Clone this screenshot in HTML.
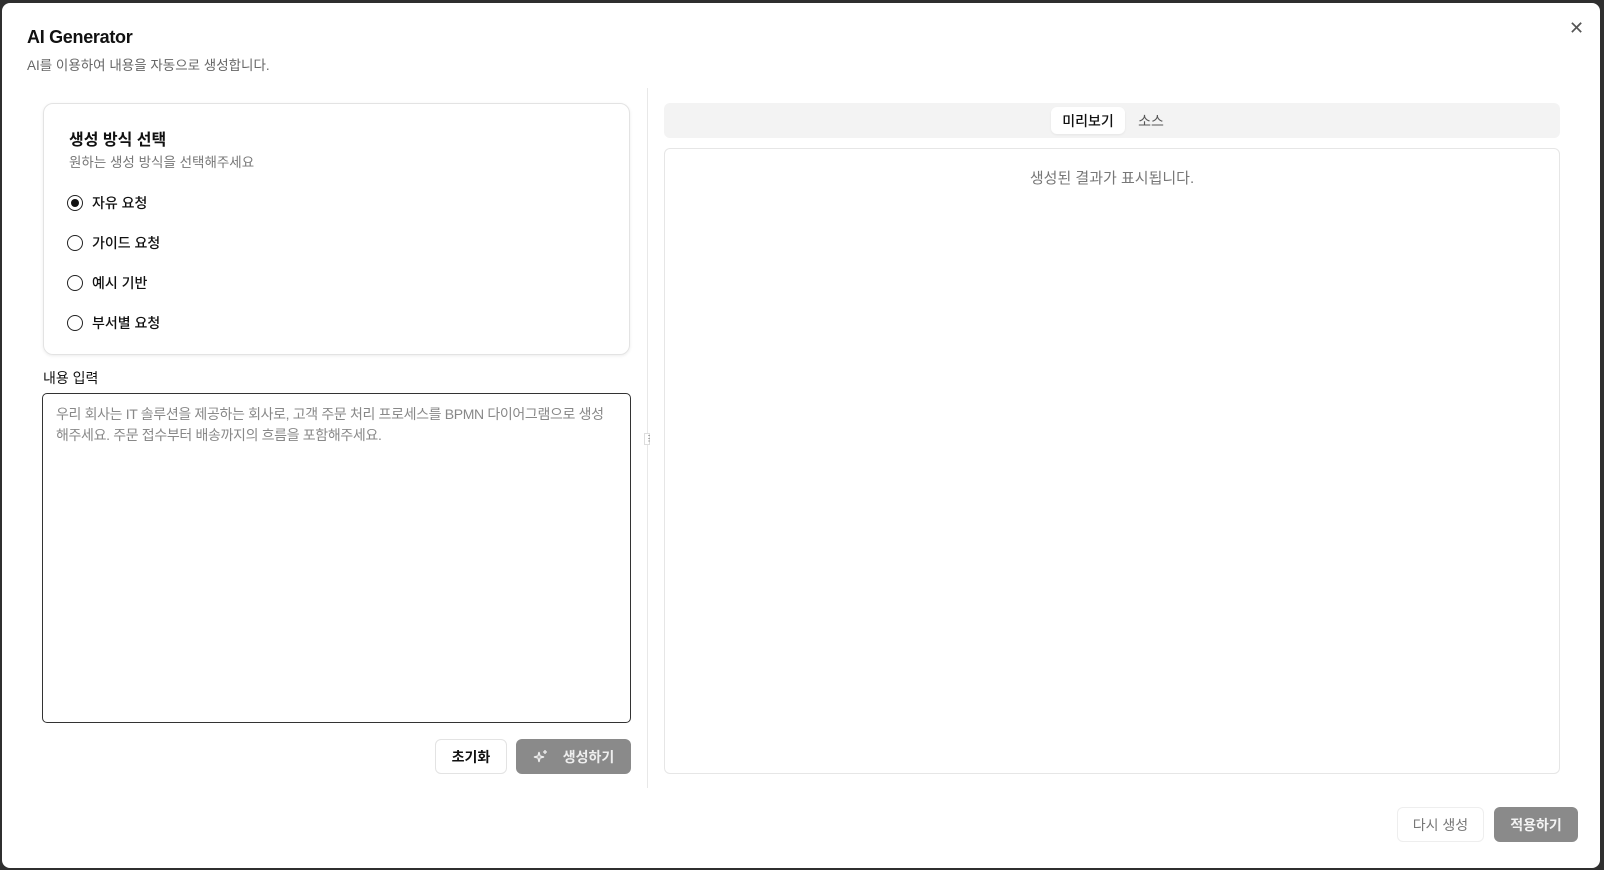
<!DOCTYPE html>
<html><head><meta charset="utf-8"><style>
*{box-sizing:border-box;margin:0;padding:0}
body{width:1604px;height:870px;background:#2f2f2f;font-family:"Liberation Sans","Noto Sans CJK KR",sans-serif;position:relative;overflow:hidden}
.modal{position:absolute;left:2px;top:3px;width:1598px;height:865px;background:#fff;border-radius:8px}
.a{position:absolute}
.title{left:25px;top:24px;font-size:18px;font-weight:bold;color:#111;letter-spacing:-0.3px}
.sub{left:25px;top:51px;font-size:13.5px;color:#666}
.close{left:1567px;top:15px;font-size:18px;color:#555}
.card{left:41px;top:100px;width:587px;height:252px;border:1px solid #e3e3e3;border-radius:10px;box-shadow:0 1px 3px rgba(0,0,0,.08)}
.ct{left:25px;top:22px;font-size:16px;font-weight:bold;color:#111}
.cs{left:25px;top:47px;font-size:13.5px;color:#777}
.r{left:23px;font-size:14px;color:#111;display:flex;align-items:center;gap:9px;font-weight:500}
.rd{width:16px;height:16px;border:1.3px solid #222;border-radius:50%;position:relative}
.rd.on::after{content:"";position:absolute;left:3px;top:3px;width:8px;height:8px;border-radius:50%;background:#111}
.lbl{left:41px;top:365px;font-size:14px;color:#111}
.ta{left:40px;top:390px;width:589px;height:330px;border:1px solid #333;border-radius:5px;padding:10px 13px;font-size:14px;line-height:21px;color:#888;letter-spacing:-0.35px}
.btn{border-radius:6px;font-size:14px;font-weight:bold;display:flex;align-items:center;justify-content:center}
.div{left:645px;top:85px;width:1px;height:700px;background:#e8e8e8}
.tabs{left:662px;top:100px;width:896px;height:35px;background:#f3f3f3;border-radius:6px}
.tab{top:4px;height:27px;font-size:14px;display:flex;align-items:center;justify-content:center;border-radius:6px}
.pv{left:662px;top:145px;width:896px;height:626px;border:1px solid #e6e6e6;border-radius:6px}
</style></head><body>
<div class="modal">
<div class="a title">AI Generator</div>
<div class="a sub">AI를 이용하여 내용을 자동으로 생성합니다.</div>
<div class="a close">✕</div>
<div class="a card">
<div class="a ct">생성 방식 선택</div>
<div class="a cs">원하는 생성 방식을 선택해주세요</div>
<div class="a r" style="top:89px"><span class="rd on"></span>자유 요청</div>
<div class="a r" style="top:129px"><span class="rd"></span>가이드 요청</div>
<div class="a r" style="top:169px"><span class="rd"></span>예시 기반</div>
<div class="a r" style="top:209px"><span class="rd"></span>부서별 요청</div>
</div>
<div class="a lbl">내용 입력</div>
<div class="a ta">우리 회사는 IT 솔루션을 제공하는 회사로, 고객 주문 처리 프로세스를 BPMN 다이어그램으로 생성 해주세요. 주문 접수부터 배송까지의 흐름을 포함해주세요.</div>
<div class="a btn" style="left:433px;top:736px;width:72px;height:35px;border:1px solid #e3e3e3;color:#111">초기화</div>
<div class="a btn" style="left:514px;top:736px;width:115px;height:35px;background:#8a8a8a;color:#eee;gap:14px"><svg width="16" height="16" viewBox="0 0 16 16" fill="none" stroke="#eee" stroke-width="1.3"><path d="M6 3 L7 7 L11 8 L7 9 L6 13 L5 9 L1 8 L5 7 Z"/><path d="M12 1v4M10 3h4"/></svg>생성하기</div>
<div class="a div"></div>
<div class="a" style="left:642px;top:430px;width:6px;height:12px;border:1px solid #ddd;background:#fff;font-size:8px;line-height:10px;text-align:center;color:#555">⋮</div>
<div class="a tabs">
<div class="a tab" style="left:387px;width:74px;background:#fff;color:#111;box-shadow:0 1px 2px rgba(0,0,0,.06);font-weight:500">미리보기</div>
<div class="a tab" style="left:464px;width:46px;color:#555">소스</div>
</div>
<div class="a pv"><div style="text-align:center;margin-top:18px;font-size:15px;color:#777">생성된 결과가 표시됩니다.</div></div>
<div class="a btn" style="left:1395px;top:804px;width:87px;height:35px;border:1px solid #eee;color:#777;font-weight:normal">다시 생성</div>
<div class="a btn" style="left:1492px;top:804px;width:84px;height:35px;background:#8a8a8a;color:#f3f3f3">적용하기</div>
</div>
</body></html>
